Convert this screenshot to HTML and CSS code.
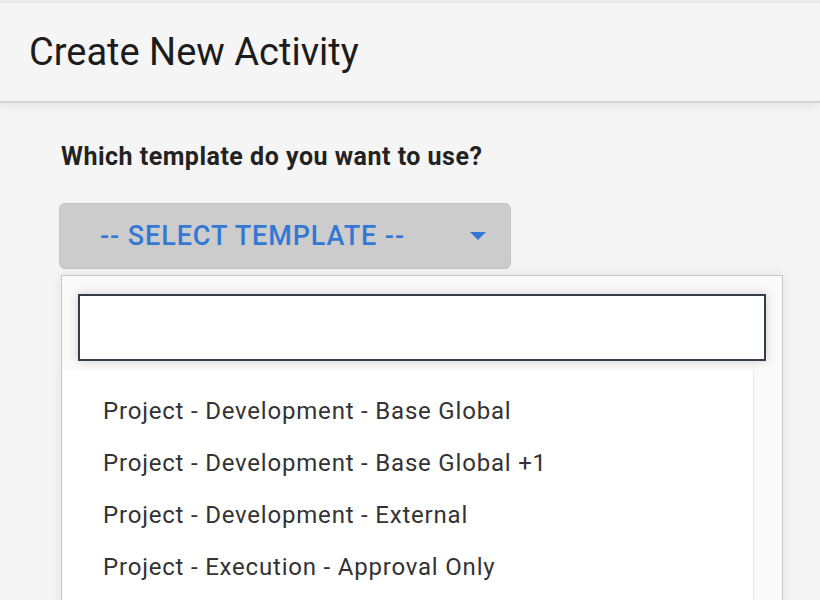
FILE: index.html
```html
<!DOCTYPE html>
<html lang="en">
<head>
    <meta charset="UTF-8">
    <meta name="viewport" content="width=device-width, initial-scale=1.0">
    <title>Create New Activity</title>
    <link rel="stylesheet" href="styles.css">
</head>
<body>
    <header class="page-header">
        <h1>Create New Activity</h1>
    </header>

    <main class="content">
        <h2 class="question">Which template do you want to use?</h2>

        <button class="select-btn" type="button">
            <span class="select-label">-- Select Template --</span>
            <span class="caret"></span>
        </button>

        <div class="dropdown">
            <div class="search-area">
                <input class="search" type="text">
            </div>
            <div class="list-wrap">
                <ul class="options">
                    <li>Project - Development - Base Global</li>
                    <li>Project - Development - Base Global +1</li>
                    <li>Project - Development - External</li>
                    <li>Project - Execution - Approval Only</li>
                </ul>
                <div class="scroll-track"></div>
            </div>
        </div>
    </main>
</body>
</html>
```

FILE: styles.css
```css
html, body {
    margin: 0;
    padding: 0;
    height: 100%;
    overflow: hidden;
}

body {
    font-family: Roboto, 'Liberation Sans', sans-serif;
    background-color: #f5f5f5;
    color: #222;
}

.page-header {
    height: 98px;
    border-top: 3px solid #ebebeb;
    border-bottom: 2px solid #d4d4d4;
    background-color: #f5f5f5;
    display: flex;
    align-items: center;
    padding-left: 29px;
    box-shadow: 0 4px 8px rgba(0, 0, 0, 0.06);
}

.page-header h1 {
    margin: 0;
    font-size: 38px;
    font-weight: 400;
    color: #1c1c1c;
}

.content {
    padding: 0 0 0 59px;
}

.question {
    margin: 39px 0 0 2px;
    font-size: 25px;
    font-weight: 700;
    letter-spacing: 0.5px;
    color: #222;
    line-height: 30px;
}

.select-btn {
    margin-top: 31px;
    width: 452px;
    height: 66px;
    background-color: #cccccc;
    border: 1px solid #c4c4c4;
    border-radius: 6px;
    display: flex;
    align-items: center;
    padding: 0 24px 0 40px;
    font-family: inherit;
    cursor: pointer;
}

.select-label {
    flex: 1;
    text-align: left;
    text-transform: uppercase;
    font-size: 27px;
    font-weight: 500;
    letter-spacing: 0.9px;
    color: #3478d4;
}

.caret {
    width: 0;
    height: 0;
    border-left: 8px solid transparent;
    border-right: 8px solid transparent;
    border-top: 8px solid #3478d4;
}

.dropdown {
    margin: 6px 0 0 2px;
    width: 720px;
    border: 1px solid #c8c8c8;
    background-color: #fafafa;
    box-shadow: 0 0 14px rgba(0, 0, 0, 0.08);
}

.search-area {
    padding: 18px 16px 9px 16px;
}

.search {
    display: block;
    box-sizing: border-box;
    width: 100%;
    height: 67px;
    border: 2px solid #363d47;
    background: #fff;
    box-shadow: 0 0 10px rgba(0, 0, 0, 0.18);
    outline: none;
}

.list-wrap {
    display: flex;
    height: 300px;
}

.options {
    flex: 1;
    margin: 0;
    padding: 15px 0 0 41px;
    list-style: none;
    background-color: #fff;
}

.options li {
    height: 52px;
    line-height: 52px;
    font-size: 24px;
    letter-spacing: 0.8px;
    color: #333;
}

.scroll-track {
    width: 28px;
    border-left: 1px solid #e6e6e6;
    background-color: #fafafa;
}
```
